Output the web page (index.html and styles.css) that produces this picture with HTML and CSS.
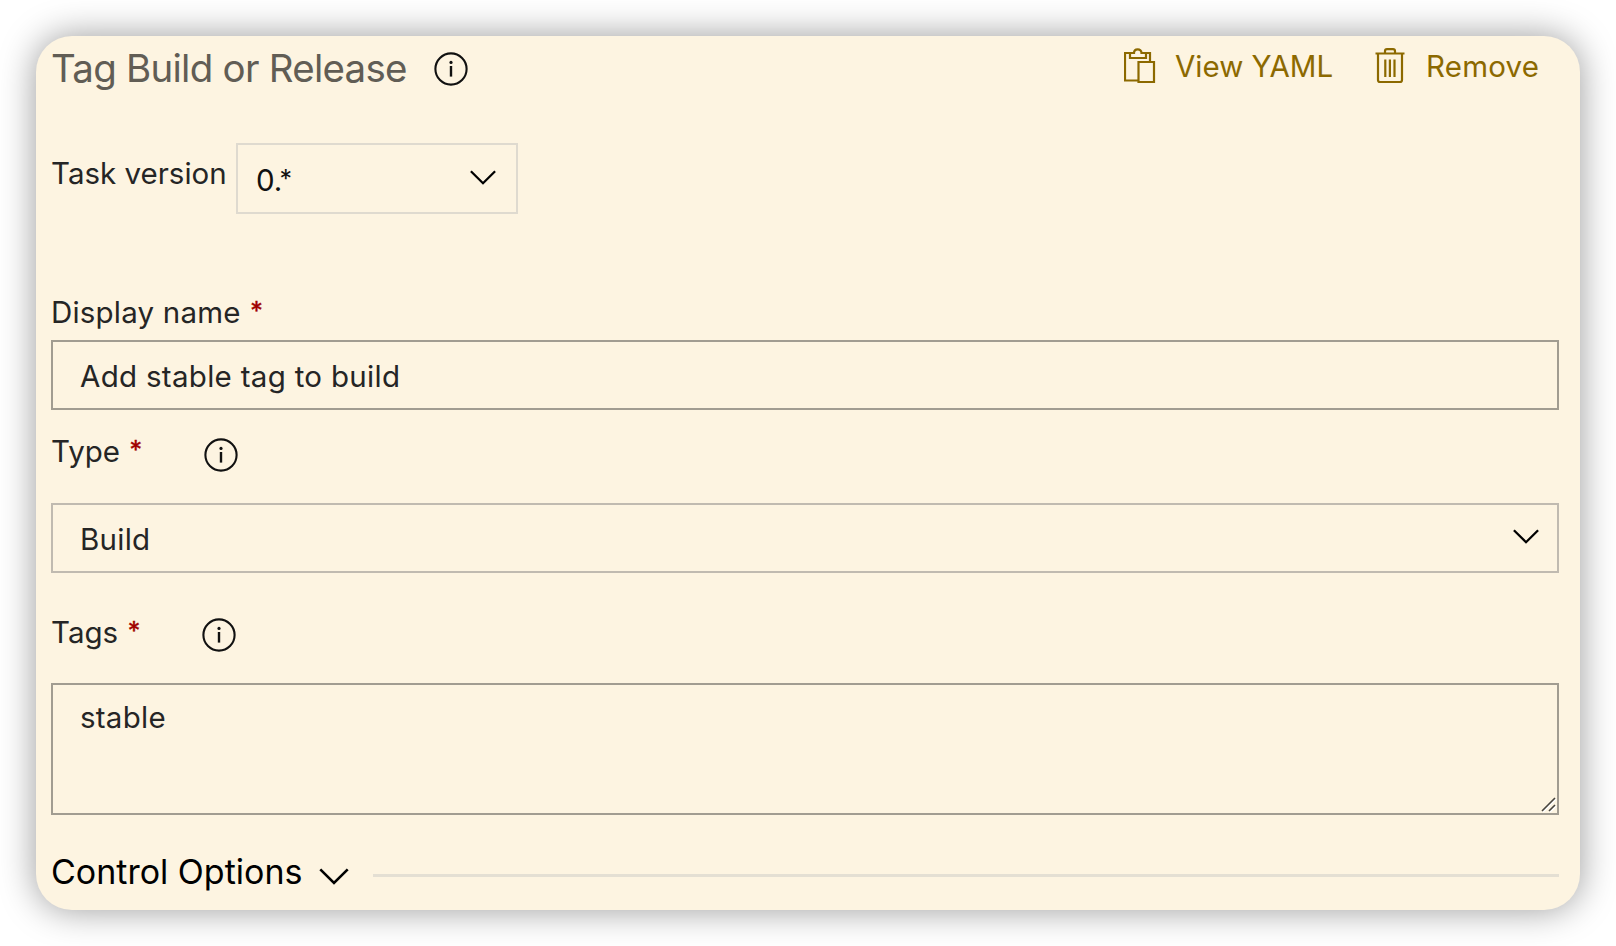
FILE: index.html
```html
<!DOCTYPE html>
<html lang="en">
<head>
<meta charset="utf-8">
<title>Tag Build or Release</title>
<link rel="stylesheet" href="styles.css">
</head>
<body>
<svg class="defs" width="0" height="0">
  <symbol id="info" viewBox="0 0 34 34"><circle cx="17" cy="17" r="15.6" fill="none" stroke="#111" stroke-width="2.1"/><path d="M17 14V24.6" stroke="#111" stroke-width="2.4"/><circle cx="17" cy="10.400" r="1.600" fill="#111"/></symbol>
  <symbol id="chevron" viewBox="0 0 26 15"><path d="M.9 1.2L13 13.2L25.1 1.2" fill="none" stroke="#000" stroke-width="2.3"/></symbol>
</svg>
<main class="card">
  <header class="header">
    <h1 class="title">Tag Build or Release</h1>
    <svg class="info"><use href="#info"/></svg>
    <nav class="actions">
      <a class="action">
        <svg class="clipboard" width="32" height="36" viewBox="0 0 32 36" fill="none" stroke="#8c6900" stroke-width="2.2"><path d="M14 32.5H1V5H7M20 5H26V13.5"/><path d="M6 5V10H22V5H17.500C17.500 2.800 15.800 1.300 13.700 1.300S10 2.800 10 5Z"/><path d="M14.500 14H30V34H14.500Z"/></svg>
        <span class="view">View YAML</span>
      </a>
      <a class="action remove">
        <svg class="trash" width="30" height="36" viewBox="0 0 30 36" fill="none" stroke="#8c6900" stroke-width="2.2"><path d="M.5 5.500H29.500M3 5.500V32Q3 34 5 34H25Q27 34 27 32V5.500M10 5.500V3Q10 1.200 12 1.200H18Q20 1.200 20 3V5.500M10.300 11.500V29M14.900 11.500V29M19.500 11.500V29"/></svg>
        <span class="remove-text">Remove</span>
      </a>
    </nav>
  </header>
  <section class="version">
    <label class="label version-label">Task version</label>
    <div class="version-select"><span class="version-value">0.<span class="wild">*</span></span><svg class="chevron"><use href="#chevron"/></svg></div>
  </section>
  <section class="field display">
    <div class="label-row"><label class="label display-label">Display name</label><span class="req">*</span></div>
    <div class="box"><span class="value display-value">Add stable tag to build</span></div>
  </section>
  <section class="field type">
    <div class="label-row"><label class="label type-label">Type</label><span class="req">*</span><svg class="info"><use href="#info"/></svg></div>
    <div class="box select"><span class="value build-value">Build</span><svg class="chevron"><use href="#chevron"/></svg></div>
  </section>
  <section class="field tags">
    <div class="label-row"><label class="label tags-label">Tags</label><span class="req">*</span><svg class="info"><use href="#info"/></svg></div>
    <div class="box area"><span class="value stable-value">stable</span><svg class="grip" width="16" height="16" viewBox="0 0 16 16" stroke-width="1.600"><path d="M2 15L15 2M9 15L15 9" stroke="#fff"/><path d="M1 14L14 1M8 14L14 8" stroke="#48453f"/></svg></div>
  </section>
  <footer class="control"><h2 class="control-title">Control Options</h2><svg class="chevron"><use href="#chevron"/></svg><div class="rule"></div></footer>
</main>
</body>
</html>
```
FILE: styles.css
```css
* { box-sizing: border-box; }
body { margin: 0; height: 946px; padding: 36px; background: #fff; font-family: Inter, "Liberation Sans", sans-serif; font-size: 29.500px; overflow: hidden; }
svg { display: block; flex: none; }
.defs { position: absolute; }
.card { width: 1544px; height: 874px; padding: 8px 21px 0 15px; border-radius: 36px; background: #fdf4e1; box-shadow: 0 0 36px rgba(0,0,0,.4); color: #252525; white-space: nowrap; }
.header { display: flex; height: 48px; align-items: flex-start; }
.title { margin: 0; width: 382.500px; font-size: 38.500px; font-weight: 400; line-height: 48px; color: #615d55; letter-spacing: -.75px; }
.info { width: 34px; height: 34px; }
.header .info { margin-top: 8px; }
.actions { display: flex; margin-left: auto; margin-right: 21px; color: #8c6900; line-height: 44px; }
.action { display: flex; }
.clipboard { margin: 4px 19px 0 0; }
.view { width: 158px; }
.remove { margin-left: 42px; }
.trash { margin: 4px 21px 0 0; }
.remove-text { width: 112px; letter-spacing: .2px; }
.version { display: flex; margin-top: 51px; height: 71px; }
.version-label { width: 185px; }
.label { line-height: 40px; }
.version-label { margin-top: 10px; }
.version-select { display: flex; width: 282px; border: 2px solid #dfdacf; padding: 0 20.500px 0 18px; justify-content: space-between; color: #111; }
.version-value { line-height: 71px; }
.wild { margin-left: -3px; font-size: 25px; line-height: 1; vertical-align: 3px; }
.chevron { width: 26px; height: 15px; }
.version-select .chevron { margin-top: 25px; }
.label-row { display: flex; height: 48px; }
.req { width: 14px; color: #a00000; font-size: 25px; line-height: 39px; margin-left: 9.500px; -webkit-text-stroke: .4px #a00000; }
.box { display: flex; height: 70px; border: 2px solid #a19c91; padding: 0 18px 0 27px; line-height: 69px; }
.display { margin-top: 78px; }
.display-label { letter-spacing: .2px; }
.display-value { letter-spacing: .3px; }
.build-value, .stable-value { letter-spacing: .25px; }
.type { margin-top: 21px; }
.type .label-row { height: 72px; }
.type .info { margin: 7px 0 0 60.500px; }
.select { border-color: #c0bab0; justify-content: space-between; }
.select .chevron { margin-top: 24px; }
.tags { margin-top: 39px; }
.tags .label-row { height: 71px; }
.tags .info { margin: 6px 0 0 60.500px; }
.area { height: 132px; line-height: 65px; padding-right: 0; justify-content: space-between; }
.grip { align-self: flex-end; }
.control { display: flex; margin-top: 33px; height: 48px; color: #000; }
.control-title { margin: 0; width: 267.500px; font-size: 34px; font-weight: 400; line-height: 48px; }
.control .chevron { width: 30px; height: 17px; margin-top: 20px; }
.rule { flex: 1; height: 3px; margin: 26px 0 0 24.500px; background: #e4dfd3; }
```
